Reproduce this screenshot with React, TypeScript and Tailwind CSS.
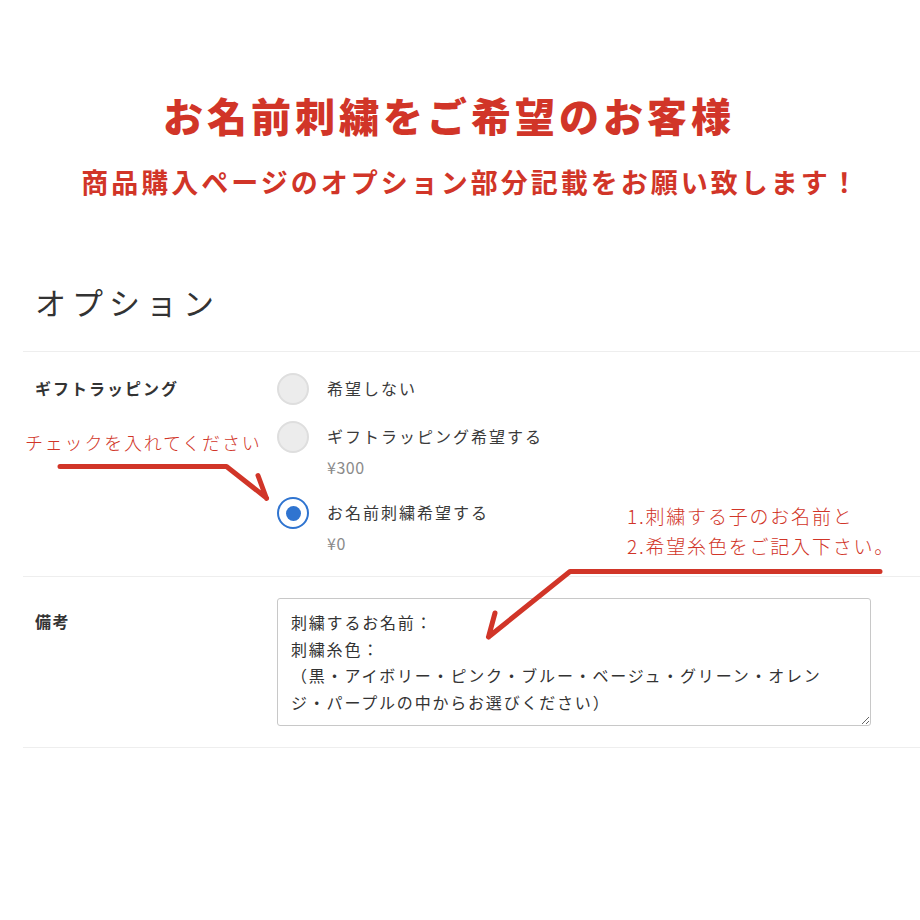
import React from "react";

function Radio({ checked }: { checked?: boolean }) {
  if (checked) {
    return (
      <div className="w-[32px] h-[32px] shrink-0 rounded-full border-[2.5px] border-[#2f74d0] bg-white flex items-center justify-center">
        <div className="w-[15px] h-[15px] rounded-full bg-[#2f74d0]" />
      </div>
    );
  }
  return <div className="w-[32px] h-[32px] shrink-0 rounded-full border-2 border-[#dedede] bg-[#ececec]" />;
}

function Option({ label, price, checked }: { label: string; price?: string; checked?: boolean }) {
  return (
    <div className="flex items-start gap-[18px]">
      <Radio checked={checked} />
      <div className="flex flex-col">
        <div className="leading-[30px] mb-[2px] text-[16px] tracking-[2px] text-[#3a3a3a]">{label}</div>
        {price && <div className="leading-[28px] text-[16px] tracking-[0.5px] text-[#8a8a8a]">{price}</div>}
      </div>
    </div>
  );
}

export default function App() {
  const note =
    "刺繍するお名前：\n刺繍糸色：\n（黒・アイボリー・ピンク・ブルー・ベージュ・グリーン・オレン\nジ・パープルの中からお選びください）";
  return (
    <div className="relative w-[920px] h-[920px] bg-white overflow-hidden font-['Noto_Sans_CJK_JP','Noto_Sans',sans-serif]">
      <div className="pt-[87px] flex flex-col items-center">
        <h1 className="text-[40px] leading-[56px] font-black tracking-[4px] text-[#d13528] ml-[-22px]">
          お名前刺繍をご希望のお客様
        </h1>
        <p className="mt-[19px] text-[27px] leading-[40px] font-bold tracking-[3px] text-[#d13528] ml-[22px]">
          商品購入ページのオプション部分記載をお願い致します！
        </p>
      </div>

      <h2 className="mt-[80px] ml-[35px] text-[31px] leading-[40px] tracking-[6px] font-normal text-[#333]">
        オプション
      </h2>

      <div className="mt-[29px] ml-[23px]">
        <div className="border-t border-[#eeeeee] flex pt-[21px] pb-[19px]">
          <div className="w-[254px] pl-[12px] pt-[3px] text-[16px] leading-[24px] font-bold tracking-[2px] text-[#333]">
            ギフトラッピング
          </div>
          <div className="flex flex-col gap-[16px]">
            <Option label="希望しない" />
            <Option label="ギフトラッピング希望する" price="¥300" />
            <Option label="お名前刺繍希望する" price="¥0" checked />
          </div>
        </div>

        <div className="border-t border-b border-[#eeeeee] flex pt-[21px] pb-[21px]">
          <div className="w-[254px] pl-[12px] pt-[10px] text-[16px] leading-[26px] font-bold tracking-[1.5px] text-[#333]">
            備考
          </div>
          <textarea
            readOnly
            defaultValue={note}
            className="w-[594px] h-[128px] border border-[#c8c8c8] rounded-[3px] px-[13px] pt-[10px] text-[16px] leading-[26.5px] tracking-[1.8px] text-[#333] outline-none resize-y bg-white"
          />
        </div>
      </div>

      <div className="absolute left-[25px] top-[430px] text-[18px] leading-[24px] font-light tracking-[1.8px] text-[#d13528]">
        チェックを入れてください
      </div>
      <div className="absolute left-[627px] top-[501px] text-[19px] leading-[30px] font-light tracking-[1.8px] text-[#d13528]">
        <div>1.刺繍する子のお名前と</div>
        <div>2.希望糸色をご記入下さい。</div>
      </div>

      <svg className="absolute inset-0 pointer-events-none" width="920" height="920" viewBox="0 0 920 920">
        <g fill="none" stroke="#d13528" strokeWidth="5" strokeLinecap="round" strokeLinejoin="round">
          <path d="M60 466.5 L226.5 466.5 L266.5 498 M258 475.5 L266.5 498.5" />
          <path d="M880 571.5 L570 571.5 L488.5 637 M495 613 L488.5 637" />
        </g>
      </svg>
    </div>
  );
}
